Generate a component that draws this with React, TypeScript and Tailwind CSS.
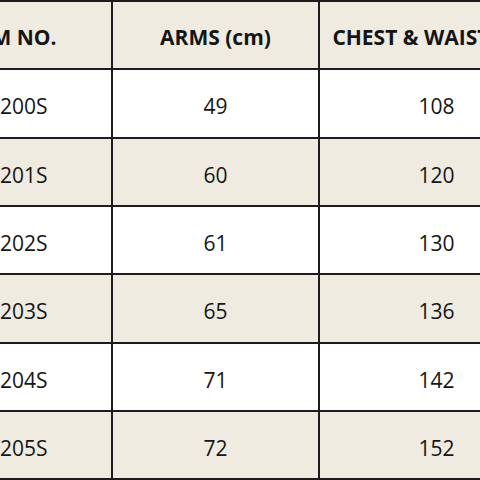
const rows = [
  { item: "SM200S", arms: "49", chest: "108" },
  { item: "SM201S", arms: "60", chest: "120" },
  { item: "SM202S", arms: "61", chest: "130" },
  { item: "SM203S", arms: "65", chest: "136" },
  { item: "SM204S", arms: "71", chest: "142" },
  { item: "SM205S", arms: "72", chest: "152" },
];

function Cell({ children, shaded, head }: { children: React.ReactNode; shaded?: boolean; head?: boolean }) {
  return (
    <div
      className={`flex items-center justify-center whitespace-nowrap text-[#151515] ${
        shaded ? "bg-[#efebe1]" : "bg-white"
      } ${head ? "pt-[5px] text-[21px] font-bold" : "pt-[7px] text-[21px] font-normal"}`}
    >
      {children}
    </div>
  );
}

export default function App() {
  return (
    <div className="h-[480px] w-[480px] overflow-hidden bg-white font-['Open_Sans',sans-serif]">
      <div className="ml-[-96px] grid w-max grid-cols-[205px_205px_233px] auto-rows-[66.33px] gap-[2px] bg-[#1c1c1c] p-[2px]">
        <Cell shaded head>ITEM NO.</Cell>
        <Cell shaded head>ARMS (cm)</Cell>
        <Cell shaded head>CHEST &amp; WAIST (cm)</Cell>
        {rows.map((row, i) => {
          const shaded = i % 2 === 1;
          return [
            <Cell key={row.item + "a"} shaded={shaded}>{row.item}</Cell>,
            <Cell key={row.item + "b"} shaded={shaded}>{row.arms}</Cell>,
            <Cell key={row.item + "c"} shaded={shaded}>{row.chest}</Cell>,
          ];
        })}
      </div>
    </div>
  );
}
